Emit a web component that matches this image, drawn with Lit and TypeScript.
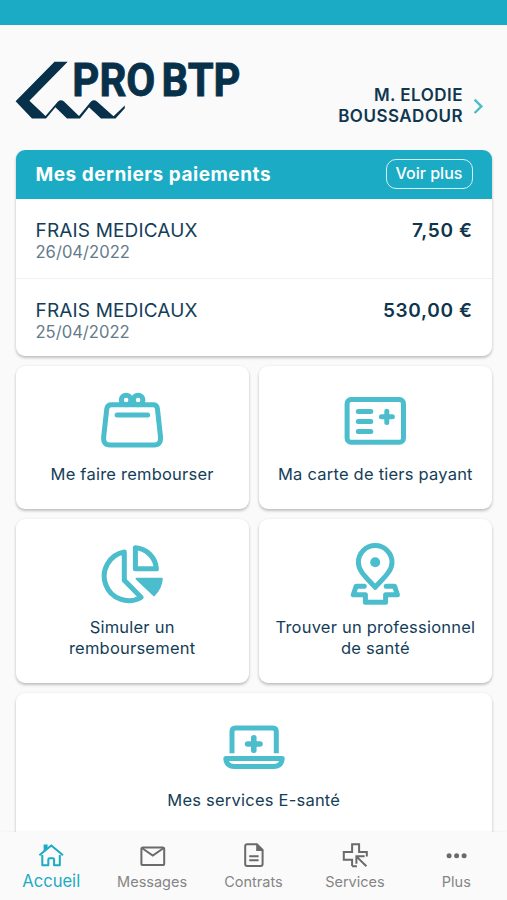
import { LitElement, html, svg, css, TemplateResult } from "lit";
import { classMap } from "lit/directives/class-map.js";

const tileIcon = (viewBox: string, shapes: TemplateResult) =>
  html`<svg class="icon" viewBox=${viewBox} aria-hidden="true">${shapes}</svg>`;

const purse = tileIcon("96.2 388 72 64", svg`
  <path d="M111.5 404.8H153.5Q157 404.8 157.6 408.5L160.8 437.5Q161 445 154.5 445H110Q103.5 445 103.8 437.5L107 408.5Q107.8 404.8 111.5 404.8Z"/>
  <circle cx="126.3" cy="400" r="4.8"/><circle cx="138.3" cy="400" r="4.8"/>
  <path d="M117.3 415H147.8"/>`);

const card = tileIcon("339.2 388 72 64", svg`
  <rect x="347.3" y="399.5" width="56.4" height="42.7" rx="4"/>
  <path d="M358.5 411.5H371M358.5 421.5H371M358.5 431.5H371M387 411.2V422.4M381.6 416.8H392.6"/>`);

const pie = tileIcon("96.2 541 72 64", svg`
  <path d="M124.5 552A24.5 24.5 0 1 0 141.2 597.3L124.5 580.2Z"/>
  <path d="M135.6 547.8A22.6 22.6 0 0 1 156.6 568.8H135.6Z"/>
  <path class="solid" d="M136.8 578.8H162Q161.5 588 154.2 595.3Z"/>`);

const pin = tileIcon("339.2 541 72 64", svg`
  <path d="M375.3 587.3C369 579.5 358.6 572 358.6 562.4A16.8 16.8 0 0 1 392.2 562.4C392.2 572 381.8 579.5 375.3 587.3Z"/>
  <circle class="dot" cx="375.4" cy="562.3" r="5"/>
  <path d="M364.5 586.2H356.3L353.5 594.8H365.6V602.2H385.8V594.8H397.6L394.8 586.2H386.4"/>`);

const laptop = tileIcon("218 715 72 64", svg`
  <path class="butt" d="M232 753.2V731.5Q232 728 235.5 728H272.8Q276.3 728 276.3 731.5V753.2"/>
  <path d="M225.8 758.5H282.2Q281.5 766.4 274 766.4H234Q226.5 766.4 225.8 758.5Z"/>
  <path class="bold" d="M253.8 737.8V750.2M247.6 744H260"/>`);

const tiles = [
  { icon: purse, lines: ["Me faire rembourser"] },
  { icon: card, lines: ["Ma carte de tiers payant"] },
  { icon: pie, lines: ["Simuler un", "remboursement"] },
  { icon: pin, lines: ["Trouver un professionnel", "de santé"] },
  { icon: laptop, lines: ["Mes services E-santé"], wide: true },
];

const payments = [
  { label: "FRAIS MEDICAUX", date: "26/04/2022", amount: "7,50 €" },
  { label: "FRAIS MEDICAUX", date: "25/04/2022", amount: "530,00 €" },
];

const tabs = [
  {
    label: "Accueil", active: true,
    icon: svg`
      <path d="M3.4 14.3L15.3 4.4L27 14.3"/>
      <path class="fill" d="M7.6 10.4V3.4H11.6V7Z"/>
      <path d="M6.3 14V24.2H12.3V18.6Q12.3 17.2 13.7 17.2H16.7Q18.1 17.2 18.1 18.6V24.2H23.8V14"/>`,
  },
  {
    label: "Messages",
    icon: svg`
      <rect x="3.4" y="6.4" width="22.8" height="17.6" rx="1.6"/>
      <path d="M4.2 7.2L14.8 14.6L25.4 7.2"/>`,
  },
  {
    label: "Contrats",
    icon: svg`
      <path d="M17.9 3.3H8.2Q6.2 3.3 6.2 5.3V22.9Q6.2 24.9 8.2 24.9H21.6Q23.6 24.9 23.6 22.9V9Z"/>
      <path class="fill" d="M17.2 2.7L24.4 10H17.2Z"/>
      <path d="M10.2 15.2H19.6M10.2 19.3H19.6"/>`,
  },
  {
    label: "Services",
    icon: svg`
      <path d="M12.1 25V18.8H3.8V11H12.1V3.2H19.1V11H26.8V15.4M12.1 25.2H16.9"/>
      <path d="M26.4 25.2L16.6 15.6M16.4 22.8V15.2H24.6"/>`,
  },
  {
    label: "Plus",
    icon: svg`
      <circle class="fill" cx="7.1" cy="14.7" r="2.5"/>
      <circle class="fill" cx="14.6" cy="14.7" r="2.5"/>
      <circle class="fill" cx="22.1" cy="14.7" r="2.5"/>`,
  },
];

class AppRoot extends LitElement {
  static styles = css`
    :host {
      display: flex;
      flex-direction: column;
      height: 900px;
      box-sizing: border-box;
      overflow: hidden;
      background: #fafafa;
      color: #143e58;
      font-family: Inter, "Liberation Sans", sans-serif;
    }
    .status { flex: none; height: 25px; background: #1cabc4; }
    .header {
      flex: none;
      display: flex;
      justify-content: space-between;
      height: 125px;
      padding: 0 24px 0 15px;
      box-sizing: border-box;
    }
    .logo { width: 240px; height: 84px; margin-top: 18px; fill: #07304a; overflow: visible; }
    .logo text { font: 700 46.8px Roboto, sans-serif; stroke: #07304a; stroke-width: 0.9; }
    .user { display: flex; align-items: flex-start; padding-top: 60px; }
    .name {
      font-size: 17px;
      font-weight: 600;
      letter-spacing: 0.48px;
      line-height: 20.5px;
      text-align: right;
      white-space: nowrap;
      color: #103750;
    }
    .chevron {
      width: 10px; height: 17px; margin: 12.5px 0 0 10px;
      fill: none; stroke: #4dbdcc; stroke-width: 2.4;
    }
    .content {
      flex: 1;
      min-height: 0;
      overflow: hidden;
      padding: 0 15px 0 15.5px;
    }
    .payments, .tile {
      background: #fff;
      border-radius: 9px;
      box-shadow: 0 2px 3px rgba(0, 0, 0, 0.22), 0 0 3px rgba(0, 0, 0, 0.06);
    }
    .payments { overflow: hidden; height: 206px; }
    .title {
      display: flex;
      align-items: center;
      justify-content: space-between;
      height: 48.5px;
      padding: 0 19.5px 0 20px;
      background: #1cabc4;
      color: #fff;
      font-size: 19px;
      font-weight: 700;
      letter-spacing: 0.52px;
    }
    .more {
      box-sizing: border-box;
      width: 87px;
      height: 30px;
      border: 1.5px solid #d5f1f6;
      border-radius: 10px;
      font-size: 16px;
      font-weight: 500;
      letter-spacing: 0;
      line-height: 27px;
      text-align: center;
    }
    .row {
      display: flex;
      justify-content: space-between;
      box-sizing: border-box;
      height: 79.5px;
      padding: 21px 20px 0;
      font-size: 19px;
      line-height: 22px;
    }
    .row + .row { border-top: 1px solid #f0f1f2; padding-top: 20.5px; }
    .label { letter-spacing: 0.16px; }
    .date { font-size: 16.6px; line-height: 21.5px; color: #647b8b; }
    .amount { font-weight: 600; letter-spacing: 0.67px; margin-right: -0.67px; color: #0d354e; }
    .tiles {
      display: grid;
      grid-template-columns: 1fr 1fr;
      grid-template-rows: 143px 164px 164px;
      gap: 10px;
      margin-top: 10px;
    }
    .tile {
      display: flex;
      flex-direction: column;
      align-items: center;
      padding-top: 22px;
      box-sizing: border-box;
      font-size: 16.5px;
      letter-spacing: 0.22px;
      line-height: 21px;
      text-align: center;
    }
    .wide { grid-column: span 2; }
    .icon {
      width: 72px; height: 64px; margin-bottom: 11.6px;
      fill: none; stroke: #4bbdcd; stroke-width: 5;
      stroke-linecap: round; stroke-linejoin: round;
    }
    .wide .icon { margin-bottom: 11px; }
    .icon .solid { fill: #4bbdcd; stroke-width: 2; }
    .icon .dot { fill: #4bbdcd; stroke: none; }
    .icon .butt { stroke-linecap: butt; }
    .icon .bold { stroke-width: 5.6; }
    .tabs {
      flex: none;
      display: grid;
      grid-template-columns: repeat(5, 1fr);
      height: 68px;
      background: #fafafa;
      box-shadow: 0 -1px 2px rgba(0, 0, 0, 0.03);
      position: relative;
    }
    .tab {
      display: flex;
      flex-direction: column;
      align-items: center;
      padding-top: 9px;
      font-size: 14.5px;
      line-height: 25px;
      color: #858585;
    }
    .tab svg { width: 29px; height: 28px; fill: none; stroke: #6a6a6a; stroke-width: 2; }
    .tab .fill { fill: #6a6a6a; stroke: none; }
    .tab.active { color: #1cabc4; font-size: 16.6px; line-height: 24px; }
    .tab.active svg { stroke: #1cabc4; stroke-linejoin: round; }
    .tab.active .fill { fill: #1cabc4; }
    .tab.active span { padding-left: 1px; }
  `;

  render() {
    return html`
      <div class="status"></div>
      <header class="header">
        <svg class="logo" viewBox="15 43 240 84">
          <path d="M54.5 61.7H67.7L29.4 100.8L45.5 116L58 101.6Q61 99 64 101.6L79 116L91 101.6Q94 99 97 101.6L113.5 116.3L124.8 105.6V108.2L115.5 118.5H101L89 107.3L80 118.5H67L55.4 107.3L46 118.5H32L15.6 101.2Z"/>
          <text x="72.3" y="95.6" textLength="83" lengthAdjust="spacingAndGlyphs">PRO</text>
          <text x="161.5" y="95.6" textLength="79" lengthAdjust="spacingAndGlyphs">BTP</text>
        </svg>
        <div class="user">
          <div class="name">M. ELODIE<br />BOUSSADOUR</div>
          <svg class="chevron" viewBox="0 0 10 17"><path d="M1.6 1.6L8.4 8.3L1.6 15"/></svg>
        </div>
      </header>
      <main class="content">
        <section class="payments">
          <div class="title"><span>Mes derniers paiements</span><span class="more">Voir plus</span></div>
          ${payments.map((p) => html`
            <div class="row">
              <div><div class="label">${p.label}</div><div class="date">${p.date}</div></div>
              <div class="amount">${p.amount}</div>
            </div>`)}
        </section>
        <section class="tiles">
          ${tiles.map((t) => html`
            <div class=${classMap({ tile: true, wide: !!t.wide })}>
              ${t.icon}${t.lines.map((l) => html`<div>${l}</div>`)}
            </div>`)}
        </section>
      </main>
      <nav class="tabs">
        ${tabs.map((t) => html`
          <div class=${classMap({ tab: true, active: !!t.active })}>
            <svg viewBox="0 0 29 28" aria-hidden="true">${t.icon}</svg>
            <span>${t.label}</span>
          </div>`)}
      </nav>
    `;
  }
}
customElements.define("app-root", AppRoot);
